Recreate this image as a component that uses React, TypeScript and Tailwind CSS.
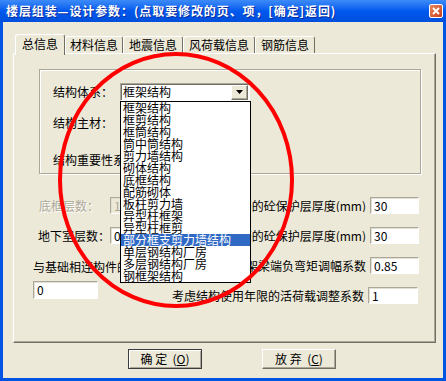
const items = [
  "框架结构",
  "框剪结构",
  "框筒结构",
  "筒中筒结构",
  "剪力墙结构",
  "砌体结构",
  "底框结构",
  "配筋砌体",
  "板柱剪力墙",
  "异型柱框架",
  "异型柱框剪",
  "部分框支剪力墙结构",
  "单层钢结构厂房",
  "多层钢结构厂房",
  "钢框架结构",
];

const tabs = [
  { label: "总信息", cls: "w-[50px]", active: true },
  { label: "材料信息", cls: "w-[58px]", active: false },
  { label: "地震信息", cls: "w-[60px]", active: false },
  { label: "风荷载信息", cls: "w-[72px]", active: false },
  { label: "钢筋信息", cls: "w-[60px]", active: false },
];

function Field({ value, className, disabled }: { value: string; className: string; disabled?: boolean }) {
  return (
    <div
      className={`flex items-center pl-[3px] border border-t-[#ACA899] border-l-[#ACA899] border-b-white border-r-white shadow-[inset_1px_1px_0_#E2DFD2] leading-none ${
        disabled ? "bg-[#ECE9D8] text-[#ACA899]" : "bg-white text-black"
      } ${className}`}
    >
      {value}
    </div>
  );
}

function Combo({ value }: { value?: string }) {
  return (
    <div className="w-[130px] h-[18px] flex items-center bg-white border border-t-[#ACA899] border-l-[#ACA899] border-b-white border-r-white shadow-[inset_1px_1px_0_#716F64]">
      <span className="flex-1 pl-[2px] leading-none">{value}</span>
      <div className="w-[17px] h-[15px] mr-px flex items-center justify-center bg-[#ECE9D8] border border-t-white border-l-white border-b-[#716F64] border-r-[#716F64] shadow-[inset_-1px_-1px_0_#ACA899]">
        <svg width="7" height="4" viewBox="0 0 7 4">
          <path d="M0 0h7L3.5 4z" fill="#000" />
        </svg>
      </div>
    </div>
  );
}

function Btn({ text, hot, isDefault }: { text: string; hot: string; isDefault?: boolean }) {
  return (
    <div
      className={`w-[74px] h-[20px] flex items-center justify-center bg-[#ECE9D8] border ${
        isDefault
          ? "border-[#3C3C3C] shadow-[inset_1px_1px_0_#fff,inset_-1px_-1px_0_#ACA899]"
          : "border-t-white border-l-white border-b-[#716F64] border-r-[#716F64] shadow-[inset_-1px_-1px_0_#ACA899]"
      }`}
    >
      <span className="whitespace-pre leading-none">
        {text} (<span className="underline">{hot}</span>)
      </span>
    </div>
  );
}

// label on the right half, its left part sits under the open list
function RightLabel({ text }: { text: string }) {
  return (
    <div className="w-[115px] overflow-hidden flex justify-end">
      <span className="shrink-0 whitespace-nowrap leading-none">{text}</span>
    </div>
  );
}

export default function App() {
  return (
    <div className="relative w-[446px] h-[381px] overflow-hidden bg-[#0054E3] text-[12px] text-black font-['Noto_Sans_CJK_SC',sans-serif]">
      {/* title bar */}
      <div className="h-[22px] flex items-center justify-between pl-[6px] pr-[3px] bg-gradient-to-b from-[#3D8BF8] via-[#0058EE] to-[#0050DC]">
        <span className="text-white font-bold text-[12px] leading-none tracking-[0.9px] [text-shadow:1px_1px_0_#0A2C9C]">
          楼层组装—设计参数：(点取要修改的页、项，[确定]返回)
        </span>
        <div className="w-[14px] h-[14px] rounded-[2px] border border-white bg-gradient-to-br from-[#E8845E] to-[#C8401A] flex items-center justify-center">
          <svg width="8" height="8" viewBox="0 0 8 8">
            <path d="M1 1l6 6M7 1L1 7" stroke="#fff" strokeWidth="1.8" />
          </svg>
        </div>
      </div>

      {/* window body */}
      <div className="mx-[3px] h-[356px] bg-[#ECE9D8] pt-[12px]">
        <div className="flex items-end h-[19px] ml-[12px]">
          {tabs.map((t) => (
            <div
              key={t.label}
              className={`${t.cls} flex items-center justify-center bg-[#ECE9D8] border-l border-t border-white border-r border-r-[#716F64] rounded-t-[3px] leading-none ${
                t.active ? "h-[21px] -mb-[2px] relative z-10 pb-[3px]" : "h-[17px]"
              }`}
            >
              {t.label}
            </div>
          ))}
        </div>

        {/* panel */}
        <div className="ml-[10px] w-[423px] h-[290px] border-l border-t border-white border-r border-b border-r-[#716F64] border-b-[#716F64] shadow-[inset_-1px_-1px_0_#ACA899]">
          <div className="ml-[25px] mt-[15px] w-[382px] h-[105px] border border-[#ACA899] shadow-[inset_1px_1px_0_#fff,1px_1px_0_#fff]">
            <div className="flex items-center h-[18px] mt-[13px]">
              <span className="ml-[13px] w-[67px] leading-none">结构体系：</span>
              <Combo value="框架结构" />
            </div>
            <div className="flex items-center h-[18px] mt-[13px]">
              <span className="ml-[13px] w-[67px] leading-none">结构主材：</span>
              <Combo />
            </div>
            <div className="flex items-center h-[18px] mt-[19px]">
              <div className="ml-[13px] w-[67px] overflow-hidden">
                <span className="block whitespace-nowrap leading-none">结构重要性系数：</span>
              </div>
              <Combo />
            </div>
          </div>

          <div className="flex items-center justify-between h-[17px] mt-[23px]">
            <div className="flex items-center ml-[25px]">
              <span className="w-[71px] leading-none text-[#ACA899] [text-shadow:1px_1px_0_#fff]">底框层数：</span>
              <Field value="1" disabled className="w-[60px] h-[17px]" />
            </div>
            <div className="flex items-center mr-[16px]">
              <RightLabel text="梁钢筋的砼保护层厚度(mm)" />
              <Field value="30" className="w-[49px] h-[17px] ml-[4px]" />
            </div>
          </div>

          <div className="flex items-center justify-between h-[17px] mt-[13px]">
            <div className="flex items-center ml-[24px]">
              <span className="w-[72px] leading-none">地下室层数：</span>
              <Field value="0" className="w-[60px] h-[17px]" />
            </div>
            <div className="flex items-center mr-[16px]">
              <RightLabel text="柱钢筋的砼保护层厚度(mm)" />
              <Field value="30" className="w-[49px] h-[17px] ml-[4px]" />
            </div>
          </div>

          <div className="flex items-center justify-between h-[17px] mt-[13px]">
            <div className="ml-[19px] w-[87px] overflow-hidden pt-[3px]">
              <span className="block whitespace-nowrap leading-none">与基础相连构件的最大底标高(m)</span>
            </div>
            <div className="flex items-center mr-[16px]">
              <RightLabel text="框架梁端负弯矩调幅系数" />
              <Field value="0.85" className="w-[49px] h-[17px] ml-[4px]" />
            </div>
          </div>

          <div className="flex items-start justify-between mt-[7px]">
            <Field value="0" className="ml-[19px] w-[65px] h-[18px]" />
            <div className="flex items-center mr-[17px] mt-[6px]">
              <span className="leading-none">考虑结构使用年限的活荷载调整系数</span>
              <Field value="1" className="w-[50px] h-[17px] ml-[4px]" />
            </div>
          </div>
        </div>

        {/* buttons */}
        <div className="flex mt-[6px] ml-[125px] gap-[60px]">
          <Btn text="确 定 " hot="O" isDefault />
          <Btn text="放 弃 " hot="C" />
        </div>
      </div>

      {/* open dropdown list */}
      <div className="absolute left-[120px] top-[101px] w-[131px] bg-white border border-black">
        {items.map((it, i) => (
          <div
            key={it}
            className={`h-[12px] pl-[2px] leading-[12px] whitespace-nowrap ${
              i === 11 ? "bg-[#316AC5] text-white" : ""
            }`}
          >
            {it}
          </div>
        ))}
      </div>

      {/* red annotation circle */}
      <svg className="absolute left-0 top-0 pointer-events-none" width="446" height="381">
        <ellipse cx="176" cy="180" rx="116" ry="126" fill="none" stroke="#FF0000" strokeWidth="4" />
      </svg>
    </div>
  );
}
